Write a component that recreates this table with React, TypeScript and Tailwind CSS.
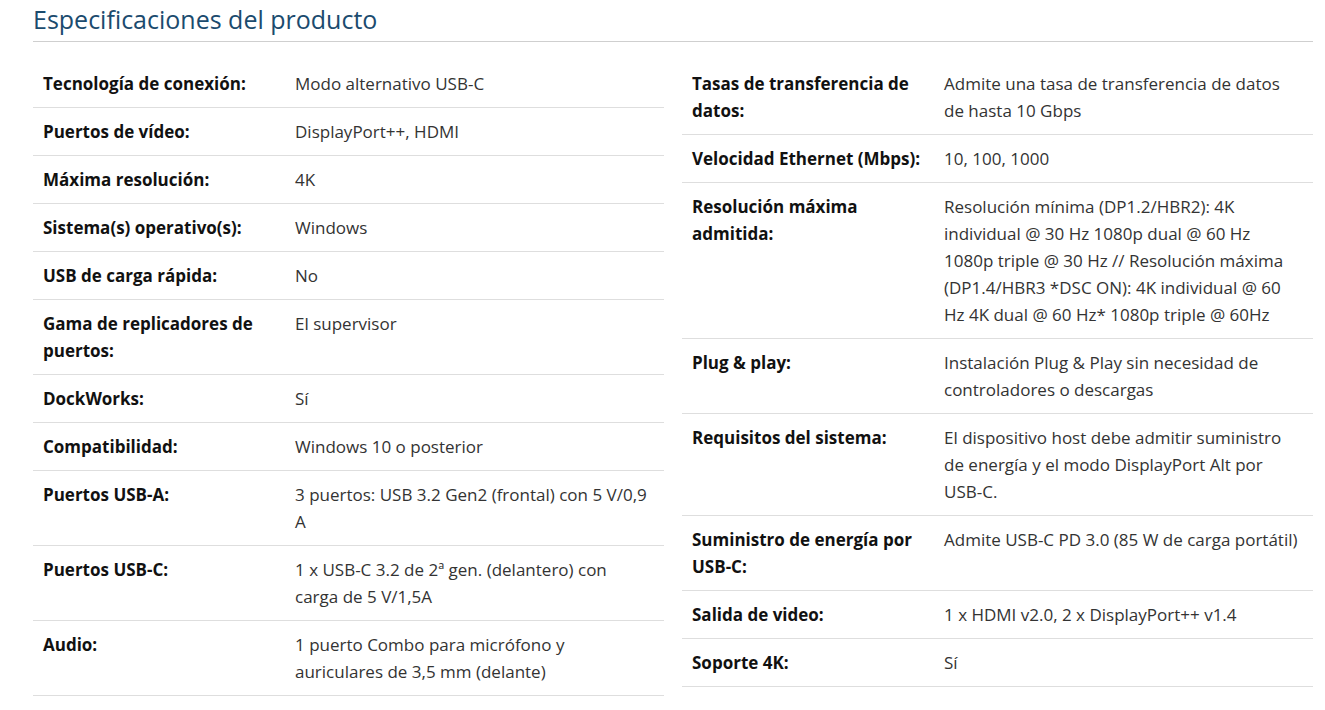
type Spec = [string, string];

const leftSpecs: Spec[] = [
  ["Tecnología de conexión:", "Modo alternativo USB-C"],
  ["Puertos de vídeo:", "DisplayPort++, HDMI"],
  ["Máxima resolución:", "4K"],
  ["Sistema(s) operativo(s):", "Windows"],
  ["USB de carga rápida:", "No"],
  ["Gama de replicadores de puertos:", "El supervisor"],
  ["DockWorks:", "Sí"],
  ["Compatibilidad:", "Windows 10 o posterior"],
  ["Puertos USB-A:", "3 puertos: USB 3.2 Gen2 (frontal) con 5 V/0,9 A"],
  ["Puertos USB-C:", "1 x USB-C 3.2 de 2ª gen. (delantero) con carga de 5 V/1,5A"],
  ["Audio:", "1 puerto Combo para micrófono y auriculares de 3,5 mm (delante)"],
];

const rightSpecs: Spec[] = [
  ["Tasas de transferencia de datos:", "Admite una tasa de transferencia de datos de hasta 10 Gbps"],
  ["Velocidad Ethernet (Mbps):", "10, 100, 1000"],
  [
    "Resolución máxima admitida:",
    "Resolución mínima (DP1.2/HBR2): 4K individual @ 30 Hz 1080p dual @ 60 Hz 1080p triple @ 30 Hz // Resolución máxima (DP1.4/HBR3 *DSC ON): 4K individual @ 60 Hz 4K dual @ 60 Hz* 1080p triple @ 60Hz",
  ],
  ["Plug & play:", "Instalación Plug & Play sin necesidad de controladores o descargas"],
  [
    "Requisitos del sistema:",
    "El dispositivo host debe admitir suministro de energía y el modo DisplayPort Alt por USB-C.",
  ],
  ["Suministro de energía por USB-C:", "Admite USB-C PD 3.0 (85 W de carga portátil)"],
  ["Salida de video:", "1 x HDMI v2.0, 2 x DisplayPort++ v1.4"],
  ["Soporte 4K:", "Sí"],
];

function SpecTable({ rows }: { rows: Spec[] }) {
  return (
    <table className="flex-1 border-collapse self-start">
      <tbody>
        {rows.map(([label, value]) => (
          <tr key={label} className="border-b border-[#dedede]">
            <td className="w-[252px] px-[10px] py-[10px] align-top font-bold text-[#111]">
              {label}
            </td>
            <td className="px-[10px] py-[10px] align-top text-[#333]">{value}</td>
          </tr>
        ))}
      </tbody>
    </table>
  );
}

export default function App() {
  return (
    <div className="min-h-[710px] bg-white px-[33px] pr-[12px] font-['Open_Sans',sans-serif] text-[17px] leading-[27px]">
      <h2 className="pt-[3px] pb-[6px] border-b border-[#cfcfcf] text-[25px] leading-[32px] font-normal text-[#1b4b6e]">
        Especificaciones del producto
      </h2>
      <div className="mt-[18px] flex gap-[18px]">
        <SpecTable rows={leftSpecs} />
        <SpecTable rows={rightSpecs} />
      </div>
    </div>
  );
}
